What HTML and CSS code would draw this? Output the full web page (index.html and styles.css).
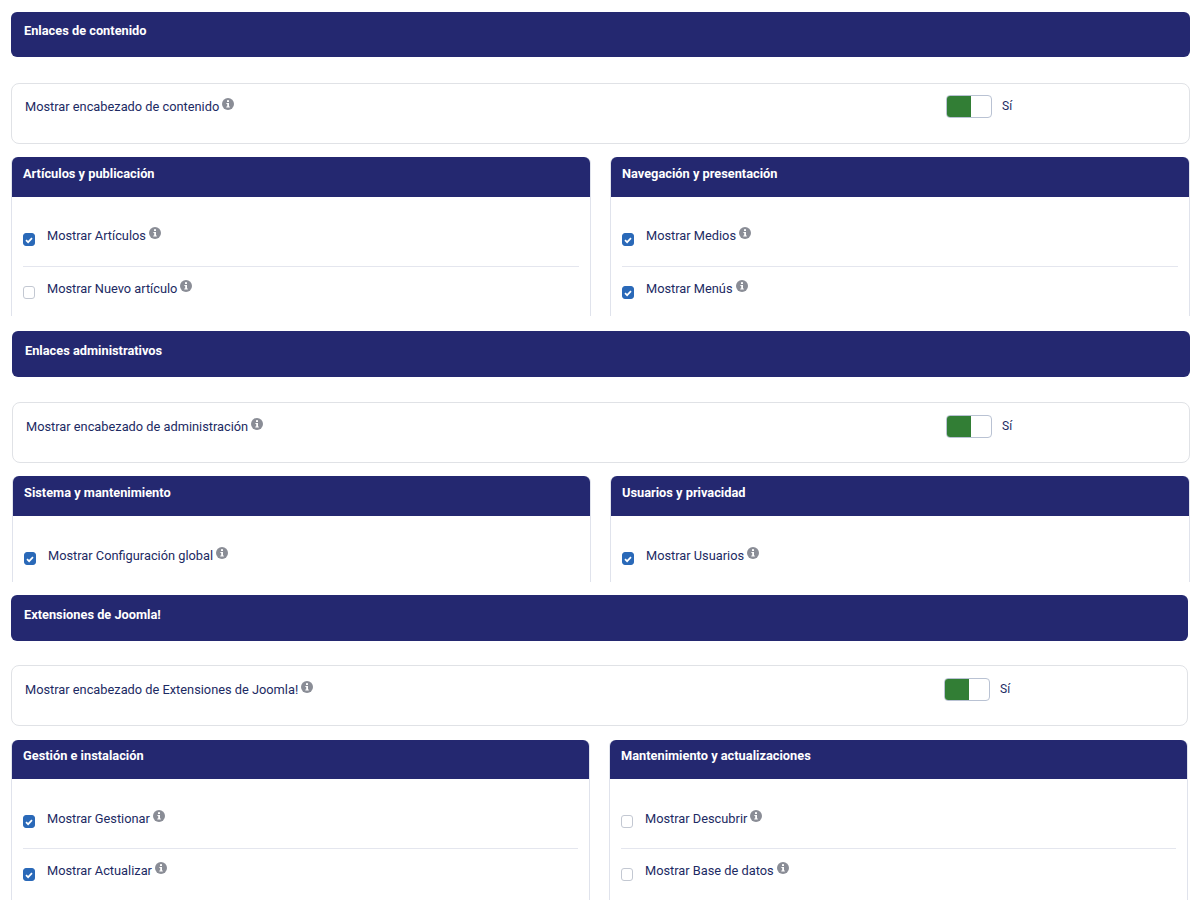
FILE: index.html
```html
<!DOCTYPE html>
<html lang="es">
<head>
<meta charset="utf-8">
<title>Opciones</title>
<link rel="stylesheet" href="styles.css">
</head>
<body>
<svg class="defs" width="0" height="0" aria-hidden="true">
  <symbol id="info" viewBox="0 0 12 12"><circle cx="6" cy="6" r="6" fill="#8a8d96"/><rect x="5" y="2.2" width="2" height="1.8" fill="#fff"/><path d="M4.4 5h2.6v3.6h.8v1H4.3v-1h.9V6h-.8z" fill="#fff"/></symbol>
  <symbol id="tick" viewBox="0 0 12 12"><path d="M3 6.2l2.1 2L9 4.2" fill="none" stroke="#fff" stroke-width="1.7"/></symbol>
</svg>

<section class="sec sec-a">
  <h2 class="bar">Enlaces de contenido</h2>
  <div class="toggle-card">
    <span class="lbl">Mostrar encabezado de contenido<svg class="info"><use href="#info"/></svg></span>
    <span class="toggle"><span class="knob"></span></span><span class="yes">Sí</span>
  </div>
  <div class="cols cols-tall">
    <div class="col">
      <h3 class="col-head">Artículos y publicación</h3>
      <div class="row"><span class="cb on"><svg><use href="#tick"/></svg></span><span class="lbl">Mostrar Artículos<svg class="info"><use href="#info"/></svg></span></div>
      <div class="row"><span class="cb"></span><span class="lbl">Mostrar Nuevo artículo<svg class="info"><use href="#info"/></svg></span></div>
    </div>
    <div class="col">
      <h3 class="col-head">Navegación y presentación</h3>
      <div class="row"><span class="cb on"><svg><use href="#tick"/></svg></span><span class="lbl">Mostrar Medios<svg class="info"><use href="#info"/></svg></span></div>
      <div class="row"><span class="cb on"><svg><use href="#tick"/></svg></span><span class="lbl">Mostrar Menús<svg class="info"><use href="#info"/></svg></span></div>
    </div>
  </div>
</section>

<section class="sec sec-b">
  <h2 class="bar">Enlaces administrativos</h2>
  <div class="toggle-card">
    <span class="lbl">Mostrar encabezado de administración<svg class="info"><use href="#info"/></svg></span>
    <span class="toggle"><span class="knob"></span></span><span class="yes">Sí</span>
  </div>
  <div class="cols cols-short">
    <div class="col">
      <h3 class="col-head">Sistema y mantenimiento</h3>
      <div class="row"><span class="cb on"><svg><use href="#tick"/></svg></span><span class="lbl">Mostrar Configuración global<svg class="info"><use href="#info"/></svg></span></div>
    </div>
    <div class="col">
      <h3 class="col-head">Usuarios y privacidad</h3>
      <div class="row"><span class="cb on"><svg><use href="#tick"/></svg></span><span class="lbl">Mostrar Usuarios<svg class="info"><use href="#info"/></svg></span></div>
    </div>
  </div>
</section>

<section class="sec sec-c">
  <h2 class="bar">Extensiones de Joomla!</h2>
  <div class="toggle-card">
    <span class="lbl">Mostrar encabezado de Extensiones de Joomla!<svg class="info"><use href="#info"/></svg></span>
    <span class="toggle"><span class="knob"></span></span><span class="yes">Sí</span>
  </div>
  <div class="cols cols-last">
    <div class="col">
      <h3 class="col-head">Gestión e instalación</h3>
      <div class="row"><span class="cb on"><svg><use href="#tick"/></svg></span><span class="lbl">Mostrar Gestionar<svg class="info"><use href="#info"/></svg></span></div>
      <div class="row"><span class="cb on"><svg><use href="#tick"/></svg></span><span class="lbl">Mostrar Actualizar<svg class="info"><use href="#info"/></svg></span></div>
    </div>
    <div class="col">
      <h3 class="col-head">Mantenimiento y actualizaciones</h3>
      <div class="row"><span class="cb"></span><span class="lbl">Mostrar Descubrir<svg class="info"><use href="#info"/></svg></span></div>
      <div class="row"><span class="cb"></span><span class="lbl">Mostrar Base de datos<svg class="info"><use href="#info"/></svg></span></div>
    </div>
  </div>
</section>
</body>
</html>
```

FILE: styles.css
```css
* { box-sizing: border-box; }
html, body { margin: 0; padding: 0; height: 900px; overflow: hidden; background: #fff; }
body { font-family: Roboto, "Liberation Sans", sans-serif; font-size: 12.8px; color: #1c2a63; }
.defs { position: absolute; }

.sec-a { margin: 12px 10px 0 11px; }
.sec-b { margin: 15px 10px 0 12px; }
.sec-c { margin: 13px 12px 0 11px; }

.bar {
  margin: 0;
  height: 45px;
  padding: 11px 13px 0;
  background: #242870;
  color: #fff;
  font-size: 12.8px;
  line-height: 16px;
  font-weight: 700;
  border-radius: 6px;
}
.sec-b .bar, .sec-c .bar { height: 46px; padding-top: 12px; }

.toggle-card {
  display: flex;
  align-items: flex-start;
  height: 61px;
  margin-top: 26px;
  padding: 12px 13px 0;
  border: 1px solid #e0e2e6;
  border-radius: 8px;
  background: #fff;
}
.sec-b .toggle-card { margin-top: 25px; padding-top: 13px; }
.sec-c .toggle-card { margin-top: 24px; padding-top: 13px; }
.toggle-card .lbl { width: 921px; flex: none; }
.sec-b .toggle-card .lbl { width: 920px; }
.sec-c .toggle-card .lbl { width: 919px; }

.lbl { margin-top: 2px; line-height: 18px; white-space: nowrap; }
.info { width: 12px; height: 12px; margin-left: 3px; vertical-align: 1px; }

.toggle {
  display: block;
  width: 46px;
  height: 23px;
  margin-top: -1px;
  border: 1px solid #b9c2d3;
  border-radius: 4px;
  background: #fff;
  overflow: hidden;
}
.knob { display: block; width: 24px; height: 100%; background: #327e35; }
.yes { margin: 1px 0 0 10px; font-size: 12px; line-height: 18px; }

.cols { display: grid; grid-template-columns: 580px 580px; column-gap: 19px; margin-top: 13px; overflow: hidden; }
.cols-tall { height: 159px; }
.cols-short { height: 106px; grid-template-columns: 579px 580px; }
.cols-last { height: 160px; margin-top: 14px; grid-template-columns: 579px 579px; }

.col { border: 1px solid #e0e3ec; border-radius: 6px 6px 0 0; padding: 0 11px; height: 240px; }
.col-head {
  margin: -1px -11px 0;
  height: 40px;
  padding: 9px 11px 0;
  background: #242870;
  color: #fff;
  font-size: 12.8px;
  line-height: 16px;
  font-weight: 700;
  border-radius: 6px 6px 0 0;
}
.cols-last .col-head { height: 39px; padding-top: 8px; }
.row { display: flex; align-items: flex-start; height: 53px; padding-top: 11px; border-bottom: 1px solid #e4e6ee; }
.col-head + .row { height: 70px; padding-top: 28px; }
.cols-short .col-head + .row, .cols-last .col-head + .row { padding-top: 29px; }
.row:last-child { border-bottom: 0; }
.cb {
  flex: none;
  display: block;
  width: 12px;
  height: 13px;
  margin: 8px 12px 0 0;
  border: 1px solid #c3c8d2;
  border-radius: 3px;
  background: #fff;
}
.cols-short .col-head + .row .cb, .cols-last .col-head + .row .cb { margin-top: 7px; }
.cb.on { background: #2a69b8; border-color: #2a69b8; }
.cb svg { display: block; width: 12px; height: 12px; margin: 0 0 0 -1px; }
```
